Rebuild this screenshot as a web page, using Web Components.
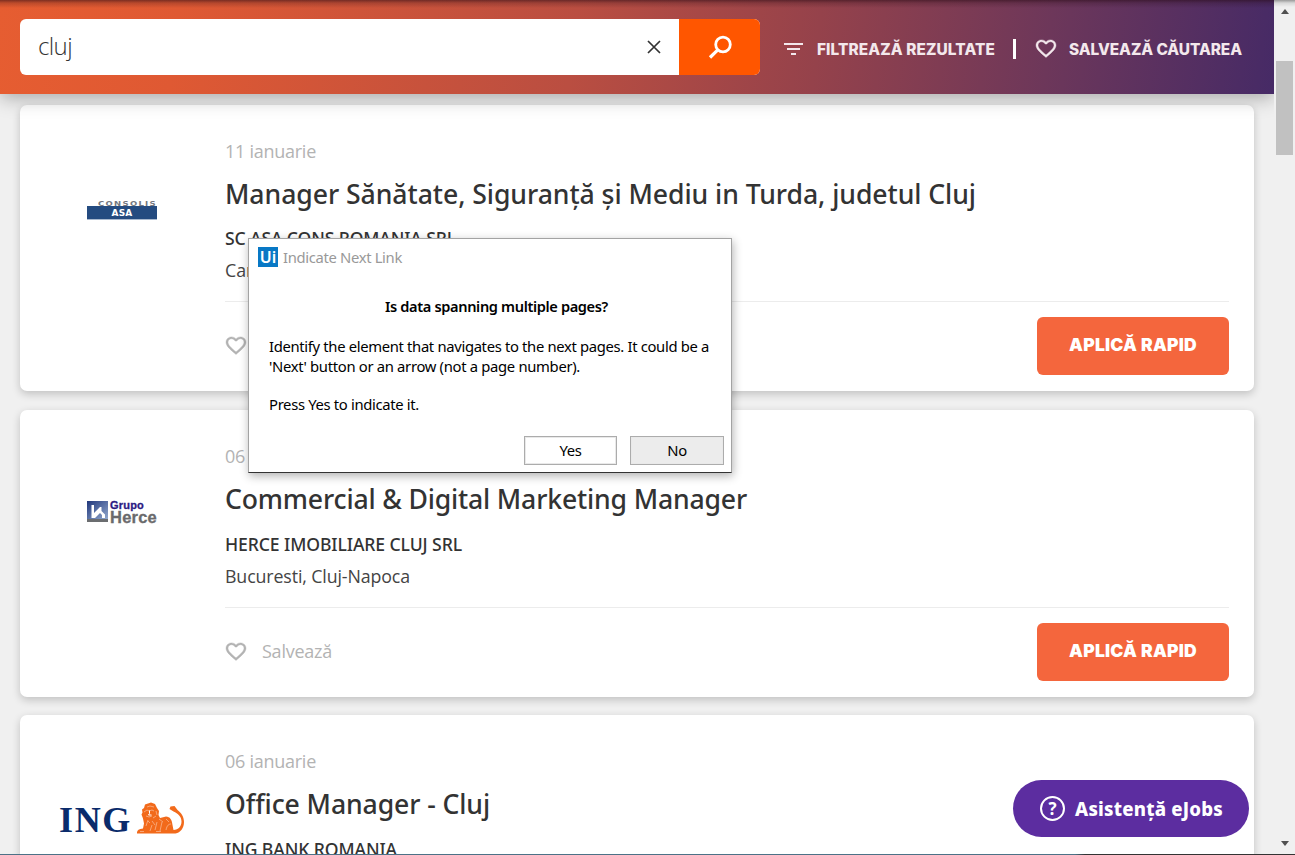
<!DOCTYPE html>
<html lang="ro">
<head>
<meta charset="utf-8">
<title>eJobs - cluj</title>
<style>
html,body{margin:0;height:855px;overflow:hidden}
body{font-family:"Open Sans","Noto Sans",sans-serif;background:#f0f0f0}
</style>
</head>
<body>
<jobs-page></jobs-page>
<script>
const define = (name, html, ready) => {
  const t = document.createElement('template');
  t.innerHTML = html;
  customElements.define(name, class extends HTMLElement {
    constructor() { super(); this.attachShadow({mode: 'open'}).append(t.content.cloneNode(true)); }
    connectedCallback() { if (ready) ready.call(this, this.shadowRoot); }
  });
};

/* One line of text, tracked so that it fills the width given in "w". */
define('text-line', `<style>
:host{display:block;white-space:nowrap}
span{display:inline-block}
</style><span><slot></slot></span>`, function (root) {
  const span = root.querySelector('span'), w = parseFloat(this.getAttribute('w'));
  if (!w) return;
  const fit = () => {
    span.style.letterSpacing = '0px';
    const n = this.textContent.length, now = span.getBoundingClientRect().width;
    if (n && now) span.style.letterSpacing = ((w - now) / n) + 'px';
  };
  requestAnimationFrame(fit);
  fit();
});

define('heart-icon', `<style>:host{display:block;width:22px;height:22px}svg{display:block;width:100%;height:100%}</style>
<svg viewBox="0 0 24 24" preserveAspectRatio="none" fill="currentColor" stroke="currentColor" stroke-width=".4"><path d="M16.5 3c-1.74 0-3.41.81-4.5 2.09C10.91 3.81 9.24 3 7.500 3 4.420 3 2 5.420 2 8.500c0 3.780 3.400 6.860 8.550 11.540L12 21.350l1.450-1.320C18.600 15.360 22 12.280 22 8.500 22 5.420 19.580 3 16.500 3zm-4.400 15.550l-.1.1-.1-.1C7.140 14.240 4 11.390 4 8.500 4 6.500 5.500 5 7.500 5c1.540 0 3.040.99 3.570 2.360h1.870C13.460 5.990 14.960 5 16.500 5c2 0 3.500 1.500 3.500 3.500 0 2.890-3.140 5.740-7.900 10.050z"/></svg>`);

define('search-box', `<style>
:host{display:flex;width:740px;height:56px;border-radius:6px;overflow:hidden;background:#fff;flex:none}
.q{flex:1;display:flex;align-items:center;justify-content:space-between;padding:0 17px 0 18px}
text-line{font:300 24px/32px "Open Sans",sans-serif;color:#333;margin-top:-3px}
.go{width:81px;background:#ff5600;display:flex;align-items:center;justify-content:center}
svg{display:block}
</style>
<div class="q"><text-line w="34">cluj</text-line>
<svg width="16" height="16" viewBox="0 0 16 16"><path d="M2 2l12 12M14 2L2 14" stroke="#333" stroke-width="1.7"/></svg></div>
<div class="go"><svg width="24" height="24" viewBox="0 0 24 24" fill="none" stroke="#fff" stroke-width="2.800"><circle cx="15" cy="9.500" r="7.300"/><path d="M9.800 14.800L2 22.500" stroke-width="3.200"/></svg></div>`);

define('top-bar', `<style>
:host{display:flex;align-items:flex-start;box-sizing:border-box;height:94px;padding:19px 0 0 20px;background:linear-gradient(to bottom,rgba(40,10,20,.55),rgba(40,10,20,.22) 3px,transparent 8px),linear-gradient(97deg,#e65d31 0%,#df5933 14%,#ba4e41 45%,#95424b 64%,#6d375a 82%,#462a66 100%);box-shadow:0 4px 18px rgba(0,0,0,.3);position:relative;z-index:1}
nav{display:flex;align-items:center;height:56px;margin-left:24px;color:#f3e8ec}
text-line{font:800 15.400px/20px Inter,sans-serif;margin-top:5px}
.bar{width:3px;height:20px;background:#fff;margin:3px 21px 0 18px}
.f{margin:3px 13px 0 0}
heart-icon{width:24px;height:23px;margin:2px 11px 0 -3px}
</style>
<search-box></search-box>
<nav><svg class="f" width="20" height="14" viewBox="0 0 20 14" fill="currentColor"><path d="M0 1h19v2H0zM3 6h13v2H3zM7 11h5v2H7z"/></svg>
<text-line w="178">FILTREAZĂ REZULTATE</text-line><div class="bar"></div>
<heart-icon></heart-icon><text-line w="173">SALVEAZĂ CĂUTAREA</text-line></nav>`);

define('apply-button', `<style>
:host{display:flex;align-items:center;justify-content:center;width:192px;height:57.500px;border-radius:6px;background:#f4663d;color:#fff}
text-line{font:900 17.500px/24px Inter,sans-serif;margin-top:-2px}
</style><text-line w="128">APLICĂ RAPID</text-line>`);

define('job-card', `<style>
:host{display:flex;box-sizing:border-box;height:287px;background:#fff;border-radius:7px;box-shadow:0 3px 9px rgba(0,0,0,.2);padding-right:25px}
.logo{width:205px;flex:none;display:flex;align-items:flex-start;justify-content:center;height:100%}
.main{flex:1;min-width:0;display:grid;padding-top:34px;grid-template-rows:24px 13px 36px 15px 24px 8px 24px 19px 1px 1fr}
:host([compact]){height:286px}
:host([compact]) .main{grid-template-rows:24px 13px 36px 14px 24px 8px 24px 19px 1px 1fr}
::slotted([slot=date]){font:400 18px/24px "Open Sans",sans-serif;color:#b3b3b3}
::slotted([slot=title]){font:500 26.600px/36px "Noto Sans",sans-serif;color:#333}
::slotted([slot=company]){font:500 17.600px/24px "Noto Sans",sans-serif;color:#333}
::slotted([slot=place]){font:400 17.800px/24px "Open Sans",sans-serif;color:#444}
.r1{grid-row:1}.r3{grid-row:3}.r5{grid-row:5}.r7{grid-row:7}
hr{grid-row:9;border:0;margin:0;background:#ececec;height:1px}
footer{grid-row:10;display:flex;justify-content:space-between;align-items:flex-start;padding-top:15px}
.save{display:flex;align-items:center;height:57px;color:#b3b3b3;font:400 18px/24px "Open Sans",sans-serif;gap:14px}
.save text-line{margin-top:-1px}
heart-icon{width:24px;height:23px;margin-left:-1px}
:host([compact]) .save text-line{display:none}
</style>
<div class="logo"><slot name="logo"></slot></div>
<div class="main">
<div class="r1"><slot name="date"></slot></div>
<div class="r3"><slot name="title"></slot></div>
<div class="r5"><slot name="company"></slot></div>
<div class="r7"><slot name="place"></slot></div>
<hr>
<footer><div class="save"><heart-icon></heart-icon><text-line w="70">Salvează</text-line></div><apply-button></apply-button></footer>
</div>`);

define('consolis-logo', `<style>
:host{display:block;width:70px;margin:95px 1px 0 0}
.a{font:700 8.500px/6px "DejaVu Sans",sans-serif;color:#737780;display:flex;justify-content:flex-end;transform:scaleY(.85);transform-origin:bottom}
.b{background:#244b80;color:#fff;height:13px;border-bottom:1px solid #a9b9cf;display:flex;justify-content:center;font:700 9px/15px "DejaVu Sans",sans-serif}
</style><div class="a"><text-line w="59">CONSOLIS</text-line></div><div class="b"><text-line w="21">ASA</text-line></div>`);

define('herce-logo', `<style>
:host{display:flex;width:70px;margin:90px 1px 0 0;gap:2px}
svg{flex:none;display:block;margin-top:1px}
.a{font:700 11px/10px "Liberation Sans",sans-serif;color:#2b1a83;-webkit-text-stroke:.3px #2b1a83}
.b{font:700 16.500px/14px "Liberation Sans",sans-serif;color:#6a6a6c;-webkit-text-stroke:.3px #6a6a6c}
</style><svg width="21" height="21" viewBox="0 0 21 21"><defs><linearGradient id="g" x1="0" y1="0" x2="1" y2="1"><stop stop-color="#20377b"/><stop offset="1" stop-color="#91a8ce"/></linearGradient></defs><path fill="url(#g)" d="M0 0h21v18H0z"/><path fill="#6b6d70" d="M0 18h21v3H0z"/><path d="M4.500 4H7v8l6-6h1.500v4l3.500 3.500V17h-3v-3l-2-2-5 5H4.500z" fill="#fff"/></svg>
<div><text-line class="a" w="34">Grupo</text-line><text-line class="b" w="47">Herce</text-line></div>`);

define('ing-logo', `<style>
:host{display:flex;width:126px;height:34px;margin-top:85px;margin-left:-1px;align-items:flex-start;gap:4px}
text-line{font:700 36px/34px "Liberation Serif",serif;color:#0a2b6b;margin-top:3px}
svg{display:block;flex:none;margin-top:2px}
</style><text-line w="73">ING</text-line>
<svg width="49" height="32" viewBox="0 0 49 32"><g fill="#f26a1b"><path d="M1 30.500c0-2.500 2-3.500 6-4l1-5-1-5-1.500-4 1-2-.5-3L8 6l1-3.500 3-1L15 .5l4 1.500 2 4 2 3-.5 4 1.500 3 6-1.500c4 0 6 3.500 6.500 8.500l1 5c5-.5 8-3.500 8-8.500 0-5-3.500-8-8-10l-4-2.500 1-2.500 4-.5 3 4c4 3 6.500 7 6.500 12 0 6-3.500 10.500-8.500 11.500H1z"/></g><path d="M8 10l3-2 2 1 3-1 2 1M10 14l3 1 3-1M11 5l3-1 4 1M10 24l2-6M14 29l2-6M19 28l2-8M24 29l2-9M30 28c1-5 3-6 5-6M4 29.500h4M20 29.500h5M17 16l3-2M20 9l1 4M16 19l3 4M23 17l4 3M30 17l3 3M12 19l2 2" fill="none" stroke="#fff" stroke-opacity=".5" stroke-width=".8"/><path d="M13.500 8.500v3l-1 1.500h3" stroke="#fff" stroke-width="1" fill="none"/></svg>`);

define('scroll-rail', `<style>
:host{display:flex;flex-direction:column;align-items:center;width:21px;height:855px;background:linear-gradient(#999,#d8d8d8 3px,#f0f0f0 7px);flex:none}
i{width:0;height:0;border:4.500px solid transparent;border-top:0;border-bottom:5px solid #505050;margin:9px 0 47px}
b{width:17px;height:94px;background:#c1c1c1}
i.d{border:4.500px solid transparent;border-top:5px solid #505050;border-bottom:0;margin:auto 0 9px}
</style><i></i><b></b><i class="d"></i>`);

define('help-pill', `<style>
:host{position:absolute;left:1013px;top:780px;width:236px;height:57px;border-radius:29px;background:#5c2da0;color:#fff;display:flex;align-items:center;box-sizing:border-box;padding-left:27px;gap:10px}
text-line{font:800 18.600px/26px "Noto Sans",sans-serif;margin-top:1px}
.o{width:21px;height:21px;border:2px solid #fff;border-radius:50%;font:700 17px/21px "Open Sans",sans-serif;text-align:center}
</style><div class="o">?</div><text-line w="148">Asistență eJobs</text-line>`);

define('win-button', `<style>
:host{display:block;box-sizing:border-box;width:94px;height:29px;border:1px solid #acacac;background:#fff;box-shadow:inset 0 0 0 1px #e9e9e9;text-align:center;font:400 14.800px/27px "Noto Sans",sans-serif;letter-spacing:-.4px;color:#000}
:host([dim]){background:#ececec}
</style><slot></slot>`);

define('next-dialog', `<style>
:host{position:absolute;left:248px;top:238px;width:484px;height:235px;box-sizing:border-box;border:1px solid #a3a3a3;border-bottom-color:#333;background:#fff;box-shadow:1px 3px 9px rgba(0,0,0,.3);color:#000;display:flex;flex-direction:column;font:400 14.800px/20px "Noto Sans",sans-serif;z-index:3}
header{display:flex;align-items:center;gap:5px;padding:8px 0 0 9px;color:#999;height:20px}
header text-line{margin-top:-1px}
.ui{width:20px;height:20px;background:#0878c5;color:#fff;font:600 16px/20px "Noto Sans",sans-serif;text-align:center}
h1{margin:29px 0 0 136px;font:600 14.600px/20px "Noto Sans",sans-serif}
section{padding:20px 0 0 20px}
.p{margin-top:18px}
footer{display:flex;justify-content:flex-end;gap:13px;margin:auto 7px 7px 0}
</style>
<header><div class="ui">Ui</div><text-line w="119">Indicate Next Link</text-line></header>
<h1><text-line w="223">Is data spanning multiple pages?</text-line></h1>
<section><text-line w="440">Identify the element that navigates to the next pages. It could be a</text-line>
<text-line w="311">'Next' button or an arrow (not a page number).</text-line>
<text-line class="p" w="150">Press Yes to indicate it.</text-line></section>
<footer><win-button style="width:93px">Yes</win-button><win-button dim>No</win-button></footer>`);

define('jobs-page', `<style>
:host{display:flex;width:1295px;height:855px;overflow:hidden;position:relative}
main{width:1274px;height:855px;overflow:hidden}
.list{display:flex;flex-direction:column;padding:11px 20px 0}
job-card{flex:none;margin-bottom:18px}
job-card[compact]{margin-bottom:19px}
.edge{position:absolute;left:0;right:0;bottom:0;height:1px;background:linear-gradient(90deg,#4c7287 1075px,#333 1085px)}
</style>
<main><top-bar></top-bar><div class="list">
<job-card compact><consolis-logo slot="logo"></consolis-logo><text-line slot="date" w="91">11 ianuarie</text-line><text-line slot="title" w="751">Manager Sănătate, Siguranţă şi Mediu in Turda, judetul Cluj</text-line><text-line slot="company" w="231">SC ASA CONS ROMANIA SRL</text-line><text-line slot="place">Cam</text-line></job-card>
<job-card><herce-logo slot="logo"></herce-logo><text-line slot="date" w="91">06 ianuarie</text-line><text-line slot="title" w="522">Commercial &amp; Digital Marketing Manager</text-line><text-line slot="company" w="237">HERCE IMOBILIARE CLUJ SRL</text-line><text-line slot="place" w="185">Bucuresti, Cluj-Napoca</text-line></job-card>
<job-card><ing-logo slot="logo"></ing-logo><text-line slot="date" w="91">06 ianuarie</text-line><text-line slot="title" w="265">Office Manager - Cluj</text-line><text-line slot="company" w="172">ING BANK ROMANIA</text-line></job-card>
</div></main>
<scroll-rail></scroll-rail><help-pill></help-pill><next-dialog></next-dialog><div class="edge"></div>`);
</script>
</body>
</html>
